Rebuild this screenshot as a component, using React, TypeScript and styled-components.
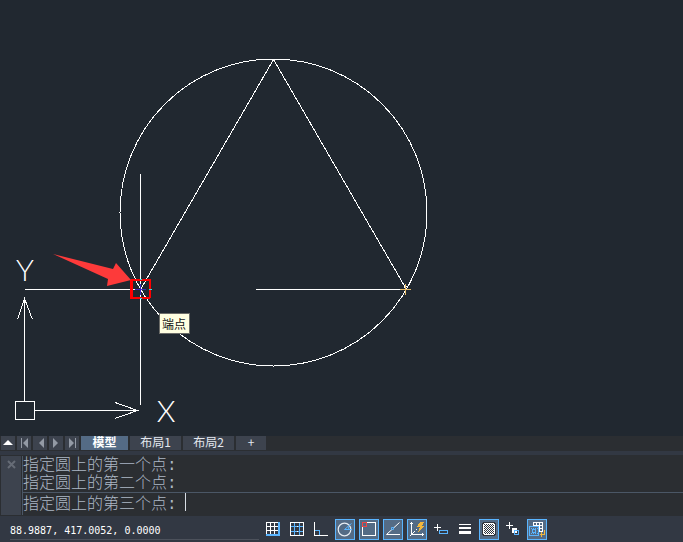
import React from "react";
import styled, { createGlobalStyle, css } from "styled-components";

const color = {
  canvas: "#212830",
  panel: "#2b2e32",
  frame: "#323843",
  button: "#3d434e",
  active: "#546b85",
  accent: "#5ab5ff",
  muted: "#adb8c6",
  rule: "#4b5766",
  gold: "#f2b73c",
};

const GlobalStyle = createGlobalStyle`
  * { box-sizing: border-box; }
  body { margin: 0; background: ${color.frame}; }
  button, input { font: inherit; color: inherit; }
`;

const Window = styled.div`
  display: flex;
  flex-direction: column;
  min-height: 100vh;
  font-family: "Noto Sans CJK SC", sans-serif;
  font-size: 12px;
  color: #fff;
`;

const Canvas = styled.main`
  position: relative;
  flex: 1;
  min-height: 430px;
  overflow: hidden;
  background: ${color.canvas};
`;

const Drawing = styled.svg`
  display: block;
  width: 100%;
  height: 430px;
  fill: none;
  stroke: #fff;
  shape-rendering: crispEdges;
`;

const AxisLabel = styled.text`
  font-family: Lato, sans-serif;
  font-weight: 300;
  font-size: 30px;
  fill: #fff;
  stroke: none;
  text-anchor: middle;
`;

const SnapTip = styled.div`
  position: absolute;
  left: 159px;
  top: 313px;
  padding: 0 3px 0 2px;
  border: 1px solid #6c6c68;
  background: #ffffe1;
  color: #111;
  line-height: 19px;
`;

const TabBar = styled.nav`
  display: flex;
  gap: 2px;
  height: 15px;
  padding: 0 1px;
  background: ${color.panel};
`;

const barButton = css`
  display: flex;
  align-items: center;
  justify-content: center;
  height: 14px;
  padding: 0;
  border: 0;
  line-height: 12px;
`;

const NavButton = styled.button`
  ${barButton}
  width: 14px;
  background: ${color.button};
`;

const Tab = styled.button<{ $active?: boolean; $small?: boolean }>`
  ${barButton}
  padding-bottom: 2px;
  min-width: ${(p) => (p.$small ? 30 : p.$active ? 47 : 51)}px;
  background: ${(p) => (p.$active ? color.active : color.button)};
  color: ${(p) => (p.$active ? "#fff" : "#e4e8ee")};
  font-weight: ${(p) => (p.$active ? 700 : 400)};
`;

const CommandPanel = styled.section`
  display: flex;
  margin-top: 4px;
  padding: 1px 0 1px 1px;
  background: ${color.panel};
`;

const CommandGrip = styled.div`
  width: 20px;
  padding: 4px 0 0 6px;
  background: ${color.button};
`;

const CloseButton = styled.button`
  display: block;
  padding: 0;
  border: 0;
  background: none;
  line-height: 0;
`;

const CommandBody = styled.div`
  flex: 1;
  margin-left: 1px;
  border-left: 1px solid ${color.rule};
  color: ${color.muted};
  font-family: "Liberation Mono", "Noto Sans CJK SC", monospace;
  font-size: 16px;
  font-weight: 300;
`;

const HistoryLine = styled.p`
  height: 18px;
  margin: 0;
  line-height: 20px;
`;

const PromptRow = styled.div`
  display: flex;
  gap: 8px;
  height: 23px;
  border-top: 1px solid ${color.rule};
  line-height: 24px;
`;

const PromptInput = styled.input`
  flex: 1;
  min-width: 0;
  height: 18px;
  padding: 0;
  border: 0;
  border-left: 1px solid #d8dde4;
  outline: 0;
  background: transparent;
`;

const StatusBar = styled.footer`
  display: flex;
  gap: 4px;
  height: 26px;
  background: ${color.frame};
`;

const Coordinates = styled.output`
  width: 249px;
  height: 24px;
  margin-left: 10px;
  border-bottom: 1px solid #4c515b;
  font-family: "DejaVu Sans Mono", monospace;
  font-size: 10px;
  line-height: 30px;
`;

const Toggle = styled.button<{ $on?: boolean }>`
  width: 20px;
  height: 21px;
  margin-top: 3px;
  padding: 0;
  border: 0;
  background: ${(p) => (p.$on ? color.active : "transparent")};
  box-shadow: ${(p) => (p.$on ? `inset 0 0 0 1px ${color.accent}` : "none")};
`;

const ToggleIcon = styled.svg`
  display: block;
  fill: none;
  stroke: #fff;
`;

const B = color.accent;

const toggles: { name: string; on?: boolean; smooth?: boolean; art: React.ReactNode }[] = [
  {
    name: "栅格显示",
    art: (
      <>
        <path d="M3.5 3v14M7.5 3v14M11.5 3v14M3 3.5h12M3 7.5h12M3 11.5h12" />
        <path d="M16 3v14M3 16h14" stroke={B} strokeWidth="2" />
      </>
    ),
  },
  {
    name: "捕捉模式",
    art: (
      <>
        <path d="M3.5 3.5h13v13h-13z" />
        <path d="M7.5 4v12M12.5 4v12M4 7.5h12M4 12.5h12" stroke={B} />
        <path d="M7 3.5h1M12 3.5h1M7 16.5h1M12 16.5h1M10 7v1M10 12v1" />
      </>
    ),
  },
  {
    name: "正交模式",
    art: (
      <>
        <path d="M4 11.5h4.5V16" stroke={B} />
        <path d="M3.5 3v13.5H17" />
      </>
    ),
  },
  {
    name: "极轴追踪",
    on: true,
    smooth: true,
    art: (
      <>
        <circle cx="9.5" cy="10.5" r="6.3" stroke="#e8edf3" strokeWidth="1.2" />
        <path d="M16.5 4.5l-7 6h7.5M13 7.5q1 1 .8 3" stroke={B} />
      </>
    ),
  },
  {
    name: "对象捕捉",
    on: true,
    art: (
      <>
        <path d="M3.5 3.5h13v13h-13z" />
        <path d="M3.5 3.5h4v4h-4z" stroke="#f04545" />
      </>
    ),
  },
  {
    name: "对象捕捉追踪",
    on: true,
    smooth: true,
    art: (
      <>
        <path d="M16.5 3.5L3.5 15.5H17" />
        <path d="M8.5 8.5h2v2h-2z" stroke={B} fill={color.active} />
      </>
    ),
  },
  {
    name: "动态 UCS",
    on: true,
    art: (
      <>
        <path d="M4.5 3v12.5H17M3 4.5h3M15.5 14v3M5 14.5h1M6 13.5h1M7 12.5h1M9 10.5h1M3 16.5h1" />
        <path d="M13 3h4l-2 4h3l-7 6 2-5h-3z" fill={color.gold} stroke="none" />
      </>
    ),
  },
  {
    name: "动态输入",
    art: (
      <>
        <path d="M6.5 5v7M3 8.5h7" />
        <path d="M8.5 11.5h8v3h-8z" stroke={B} fill={color.frame} />
      </>
    ),
  },
  {
    name: "线宽",
    art: <path d="M4 5h12v1H4zM4 8h12v2H4zM4 12h12v3H4z" fill="#fff" stroke="none" />,
  },
  {
    name: "透明度",
    on: true,
    art: (
      <>
        <path d="M4 3h12v1h1v12h-1v1H4v-1H3V4h1z" fill="#30343c" stroke="none" />
        <path d="M5 4h10v1h1v10h-1v1H5v-1H4V5h1z" fill="#fff" stroke="none" />
        {Array.from({ length: 10 }, (_, y) => (
          <path
            key={y}
            d={`M${5 + (y % 2)} ${5.5 + y}h${10 - (y % 2)}`}
            stroke="#30343c"
            strokeDasharray="1 1"
          />
        ))}
      </>
    ),
  },
  {
    name: "选择循环",
    art: (
      <>
        <path d="M6.5 3v7M3 6.5h7" />
        <path d="M9 9h5v5H9z" fill="#fff" stroke="none" />
        <path d="M11.5 11.5h4v4h-4z" stroke={B} />
        <path d="M12 12h3v3h-3z" fill={color.frame} stroke="none" />
        <path d="M12 12h2v2h-2z" fill="#fff" stroke="none" />
      </>
    ),
  },
  {
    name: "注释监视器",
    on: true,
    art: (
      <>
        <path d="M6.5 3.5h9v9h-9zM9.5 3v10M12.5 3v10M6 6.5h10M6 9.5h10" />
        <path d="M2 7h10v10H2z" fill={color.active} stroke="none" />
        <path d="M2.5 7.5h9v9h-9z" stroke={B} />
        <path d="M5.5 10.5h3v3h-3z" stroke={B} />
        <path d="M4 9.5h7M4 14.5h7" stroke={B} strokeDasharray="1 1" />
        <path d="M17.5 11v4.5H13M14.5 13v5" stroke={color.gold} />
      </>
    ),
  },
];

const navArrows = [
  { name: "首个布局", d: "M4 2h1v10H4zM11 2v10L6 7z" },
  { name: "上一布局", d: "M11 2v10L6 7z" },
  { name: "下一布局", d: "M4 2v10l5-5z" },
  { name: "末个布局", d: "M4 2v10l5-5zM10 2h1v10h-1z" },
];

export default function App() {
  return (
    <Window>
      <GlobalStyle />
      <Canvas>
        <Drawing role="img" aria-label="圆与三角形">
          <circle cx="273.5" cy="212.5" r="153.5" />
          <path d="M140.5 289.5L273.5 59.5L406.5 289.5" />
          <path d="M140.5 174v110M140.5 295v110M25 289.5h110M256 289.5h145" />
          <path d="M140.5 284v11M135 289.5h11" stroke="#3826b8" />
          <path d="M400 289.5h11M405.5 284v11" stroke="#e9bd68" />
          <path d="M404 287.5h1M406 286.5h1" />
          <rect x="131" y="280" width="19" height="18" rx="1" stroke="#f00" strokeWidth="2" />
          <path d="M132.5 281v16" stroke="#f00" />
          <path d="M140 279.5h2M140 298.5h2M149 289.5h3" stroke="#35dce0" />
          <path
            d="M53 254L113 269L116 263L131 280L107 286L108 279Z"
            fill="#fd3a3a"
            stroke="none"
            shapeRendering="auto"
          />
          <path d="M15.5 401.5h19v18h-19zM24.5 401V298M17.5 319.5L24.5 298.5L32.5 319.5" />
          <path d="M35 410.5h102M115 402.5L137.5 410.5L115 418.5" />
          <AxisLabel x="25" y="281">Y</AxisLabel>
          <AxisLabel x="166" y="422">X</AxisLabel>
        </Drawing>
        <SnapTip role="tooltip">端点</SnapTip>
      </Canvas>

      <TabBar aria-label="布局">
        <NavButton aria-label="展开">
          <svg width="14" height="14"><path d="M2 9l5-5 5 5z" fill="#fff" /></svg>
        </NavButton>
        {navArrows.map((a) => (
          <NavButton key={a.name} aria-label={a.name}>
            <svg width="14" height="14"><path d={a.d} fill="#939aa5" /></svg>
          </NavButton>
        ))}
        <Tab $active>模型</Tab>
        <Tab>布局1</Tab>
        <Tab>布局2</Tab>
        <Tab $small aria-label="新建布局">+</Tab>
      </TabBar>

      <CommandPanel>
        <CommandGrip>
          <CloseButton aria-label="关闭">
            <svg width="9" height="9" viewBox="0 0 9 9">
              <path d="M1 1l7 7M8 1L1 8" stroke="#666c76" strokeWidth="2" />
            </svg>
          </CloseButton>
        </CommandGrip>
        <CommandBody>
          <HistoryLine>指定圆上的第一个点:</HistoryLine>
          <HistoryLine>指定圆上的第二个点:</HistoryLine>
          <PromptRow>
            <label htmlFor="command">指定圆上的第三个点:</label>
            <PromptInput id="command" />
          </PromptRow>
        </CommandBody>
      </CommandPanel>

      <StatusBar>
        <Coordinates>88.9887, 417.0052, 0.0000</Coordinates>
        {toggles.map((t) => (
          <Toggle key={t.name} $on={t.on} aria-label={t.name} aria-pressed={!!t.on}>
            <ToggleIcon
              width="20"
              height="21"
              shapeRendering={t.smooth ? "auto" : "crispEdges"}
            >
              {t.art}
            </ToggleIcon>
          </Toggle>
        ))}
      </StatusBar>
    </Window>
  );
}
